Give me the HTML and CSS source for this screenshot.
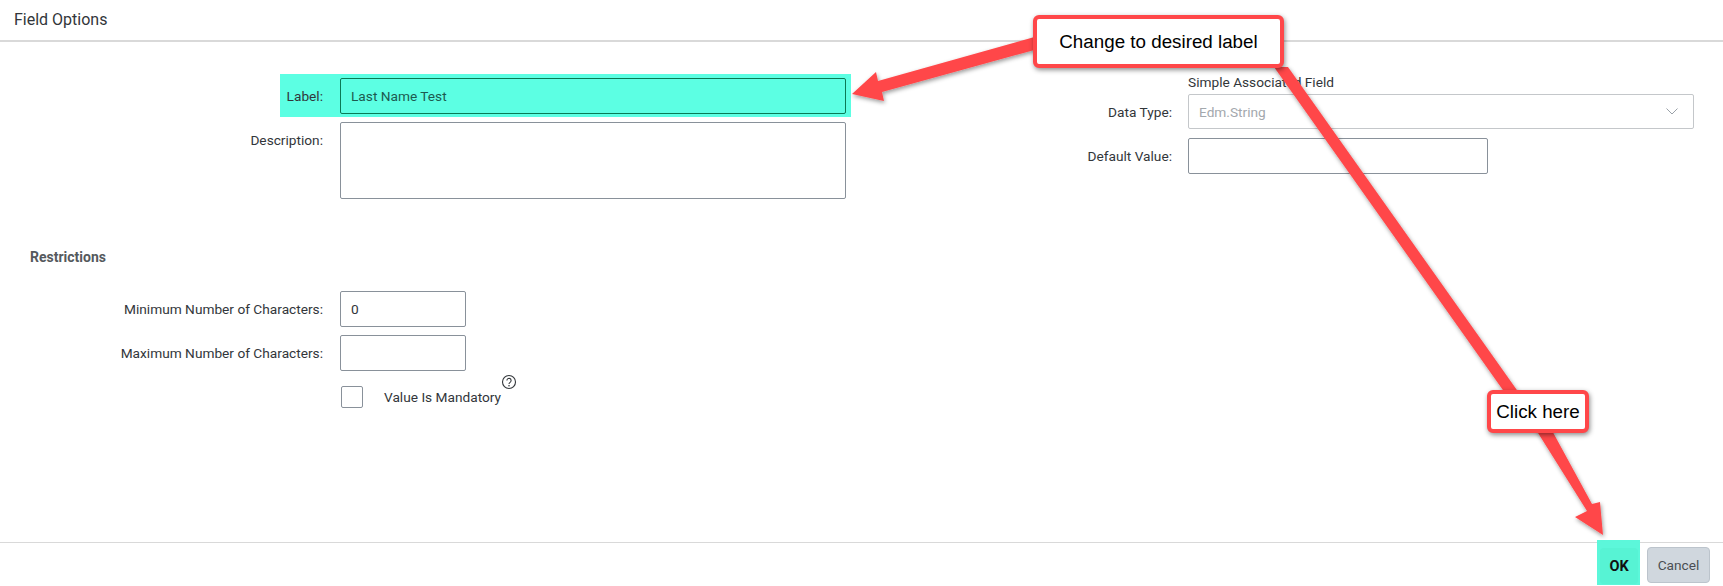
FILE: index.html
```html
<!DOCTYPE html>
<html lang="en">
<head>
    <meta charset="UTF-8">
    <title>Field Options</title>
    <link rel="stylesheet" href="styles.css">
</head>
<body>
    <div class="dialog">
        <div class="dialog-header">Field Options</div>

        <div class="dialog-body">
            <div class="columns">
                <div class="col-left">
                    <div class="row row-label">
                        <label class="field-label">Label:</label>
                        <div class="input input-wide input-label">Last Name Test</div>
                    </div>
                    <div class="row row-desc">
                        <label class="field-label">Description:</label>
                        <div class="input input-wide input-desc"></div>
                    </div>
                </div>
                <div class="col-right">
                    <div class="assoc">Simple Associated Field</div>
                    <div class="row">
                        <label class="field-label">Data Type:</label>
                        <div class="input select">
                            <span>Edm.String</span>
                            <svg class="chevron" viewBox="0 0 12 7" width="12" height="7"><path d="M.5 .5l5.5 5.5 5.5-5.5" fill="none" stroke="#9aa1a8" stroke-width="1"/></svg>
                        </div>
                    </div>
                    <div class="row row-default">
                        <label class="field-label">Default Value:</label>
                        <div class="input input-default"></div>
                    </div>
                </div>
            </div>

            <h4 class="section-title">Restrictions</h4>

            <div class="row">
                <label class="field-label">Minimum Number of Characters:</label>
                <div class="input input-num">0</div>
            </div>
            <div class="row row-max">
                <label class="field-label">Maximum Number of Characters:</label>
                <div class="input input-num"></div>
            </div>
            <div class="row-check">
                <div class="checkbox"></div>
                <span class="check-text">Value Is Mandatory</span>
                <svg class="help" viewBox="0 0 16 16" width="16" height="16">
                    <circle cx="8" cy="8" r="6.5" fill="none" stroke="#32363a" stroke-width="1.1"/>
                    <path d="M5.9 6.4a2.1 2.1 0 1 1 3.4 1.7c-.8.6-1.3 1-1.3 1.9" fill="none" stroke="#32363a" stroke-width="1.1"/>
                    <circle cx="8" cy="11.8" r=".8" fill="#32363a"/>
                </svg>
            </div>
        </div>

        <div class="dialog-footer">
            <div class="ok-mark"><button class="btn btn-ok">OK</button></div>
            <button class="btn btn-cancel">Cancel</button>
        </div>
    </div>

    <!-- annotation arrows and callouts sit on top of the dialog -->
    <svg class="arrows" width="1723" height="586" viewBox="0 0 1723 586">
        <defs>
            <filter id="shade" x="-10%" y="-10%" width="120%" height="120%">
                <feDropShadow dx="1" dy="2" stdDeviation="2" flood-color="#000" flood-opacity="0.4"/>
            </filter>
        </defs>
        <g fill="#ff4749" filter="url(#shade)">
            <polygon points="1038,36 878,81 876,72 852,94 884,101 882,92 1038,49"/>
            <polygon points="1274,67 1288,67 1524,400 1510,400"/>
            <polygon points="1533,425 1549,425 1592,504 1600,502 1603,535 1575,517 1587,511"/>
        </g>
    </svg>
    <div class="callout callout-label">Change to desired label</div>
    <div class="callout callout-click">Click here</div>
</body>
</html>
```

FILE: styles.css
```css
* {
    margin: 0;
    padding: 0;
    box-sizing: border-box;
}

body {
    font-family: Roboto, 'Liberation Sans', sans-serif;
    font-size: 13.7px;
    color: #32363a;
    background: white;
    width: 1723px;
    height: 586px;
    overflow: hidden;
}

.dialog {
    display: flex;
    flex-direction: column;
    height: 586px;
}

.dialog-header {
    height: 42px;
    padding: 0 14px;
    line-height: 40px;
    font-size: 16px;
    border-bottom: 2px solid #d9d9d9;
}

.dialog-body {
    flex: 1;
    padding-top: 32px;
}

.columns {
    display: flex;
    height: 173px;
}

.col-left {
    width: 860px;
}

.col-right {
    flex: 1;
}

.row {
    display: flex;
    align-items: center;
}

.field-label {
    flex: none;
    width: 323px;
    margin-right: 17px;
    text-align: right;
}

.col-right .field-label {
    width: 312px;
    margin-right: 16px;
}

.input {
    flex: none;
    border: 1px solid #89919a;
    border-radius: 2px;
    background: white;
    padding-left: 10px;
    height: 36px;
    line-height: 34px;
}

.input-wide {
    width: 506px;
}

.row-label {
    width: 571px;
    height: 43px;
    margin-left: 280px;
    background: #5cffe3;
}

.row-label .field-label {
    width: 43px;
}

.input-label {
    background: #5cffe3;
    border-color: #0a7a55;
    color: #1d5a50;
}

.row-desc {
    align-items: flex-start;
    margin-top: 5px;
}

.row-desc .field-label {
    line-height: 36px;
}

.input-desc {
    height: 77px;
}

.assoc {
    height: 20px;
    line-height: 17px;
    padding-left: 328px;
}

.select {
    display: flex;
    align-items: center;
    justify-content: space-between;
    width: 506px;
    height: 35px;
    border-color: #c4c7ca;
    color: #a3a8ad;
    padding-right: 15px;
}

.row-default {
    margin-top: 9px;
}

.input-default {
    width: 300px;
}

.section-title {
    height: 20px;
    line-height: 20px;
    margin: 0 0 24px 30px;
    font-size: 14px;
    font-weight: 700;
    color: #55595d;
}

.input-num {
    width: 126px;
}

.row-max {
    margin-top: 8px;
}

.row-check {
    display: flex;
    align-items: center;
    margin: 15px 0 0 341px;
}

.checkbox {
    width: 22px;
    height: 22px;
    border: 1px solid #89919a;
    border-radius: 2px;
    margin-right: 21px;
}

.help {
    margin: -30px 0 0 0;
}

.dialog-footer {
    display: flex;
    justify-content: flex-end;
    align-items: flex-start;
    gap: 7px;
    height: 44px;
    padding-right: 13px;
    border-top: 1px solid #d9d9d9;
}

.ok-mark {
    width: 43px;
    height: 45px;
    margin-top: -3px;
    padding: 8px 2px 1px 3px;
    background: #5cf7da;
}

.btn {
    height: 36px;
    border-radius: 4px;
    font-family: inherit;
    font-size: 13.7px;
}

.btn-ok {
    display: block;
    width: 38px;
    border: none;
    background: #57f3d4;
    color: #111;
    font-size: 14.5px;
    font-weight: 700;
}

.btn-cancel {
    width: 63px;
    margin-top: 4px;
    border: 1px solid #bcc4cc;
    background: #d0d7de;
    color: #4a4e52;
}

.arrows {
    position: absolute;
    left: 0;
    top: 0;
}

.callout {
    position: absolute;
    display: flex;
    align-items: center;
    justify-content: center;
    border: 4px solid #ff4749;
    border-radius: 6px;
    background: white;
    color: black;
    font-family: 'Liberation Sans', Arial, sans-serif;
    font-size: 18.8px;
    box-shadow: 1px 2px 5px rgba(0, 0, 0, 0.45);
}

.callout-label {
    left: 1033px;
    top: 15px;
    width: 251px;
    height: 53px;
}

.callout-click {
    left: 1487px;
    top: 390px;
    width: 102px;
    height: 43px;
}
```
